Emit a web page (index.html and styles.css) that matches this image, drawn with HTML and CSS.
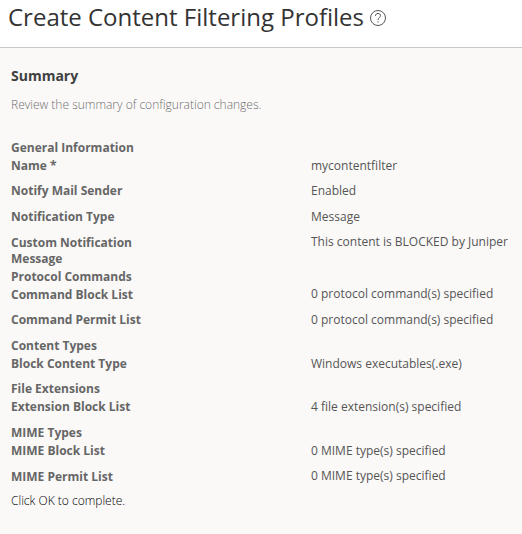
FILE: index.html
```html
<!DOCTYPE html>
<html lang="en">
<head>
<meta charset="utf-8">
<title>Create Content Filtering Profiles</title>
<link rel="stylesheet" href="styles.css">
</head>
<body>
<header class="page-header">
  <h1 class="page-title">Create Content Filtering Profiles</h1>
  <svg class="help" viewBox="0 0 18 18" width="18" height="18" role="img" aria-label="Help">
    <circle cx="9" cy="9" r="7.5"/>
    <path d="M6.5 6.9C6.5 5.3 7.5 4.4 9 4.4s2.5.9 2.5 2.3c0 1.8-2.5 1.9-2.5 4.3M9 12.3v1.3"/>
  </svg>
</header>
<main class="panel">
  <h2 class="panel-title">Summary</h2>
  <p class="intro">Review the summary of configuration changes.</p>
  <section class="group general">
    <h3 class="group-title">General Information</h3>
    <div class="row first"><span class="label">Name *</span><span class="value">mycontentfilter</span></div>
    <div class="row"><span class="label">Notify Mail Sender</span><span class="value">Enabled</span></div>
    <div class="row"><span class="label">Notification Type</span><span class="value">Message</span></div>
    <div class="row"><span class="label">Custom Notification Message</span><span class="value">This content is BLOCKED by Juniper</span></div>
  </section>
  <section class="group protocol">
    <h3 class="group-title">Protocol Commands</h3>
    <div class="row first"><span class="label">Command Block List</span><span class="value">0 protocol command(s) specified</span></div>
    <div class="row"><span class="label">Command Permit List</span><span class="value">0 protocol command(s) specified</span></div>
  </section>
  <section class="group">
    <h3 class="group-title">Content Types</h3>
    <div class="row first"><span class="label">Block Content Type</span><span class="value">Windows executables(.exe)</span></div>
  </section>
  <section class="group">
    <h3 class="group-title">File Extensions</h3>
    <div class="row first"><span class="label">Extension Block List</span><span class="value">4 file extension(s) specified</span></div>
  </section>
  <section class="group">
    <h3 class="group-title">MIME Types</h3>
    <div class="row first"><span class="label">MIME Block List</span><span class="value">0 MIME type(s) specified</span></div>
    <div class="row"><span class="label">MIME Permit List</span><span class="value">0 MIME type(s) specified</span></div>
  </section>
  <p class="closing">Click OK to complete.</p>
</main>
</body>
</html>
```
FILE: styles.css
```css
* { box-sizing: border-box; margin: 0; padding: 0; }
body {
  font-family: "Open Sans", sans-serif;
  font-size: 12px;
  line-height: 16px;
  color: #555;
  background: #fff;
  min-height: 100vh;
  display: flex;
  flex-direction: column;
}
.page-header {
  height: 48px;
  flex: none;
  display: flex;
  padding-left: 8px;
  border-bottom: 1px solid #c8c8c8;
}
.page-title { font-size: 24px; line-height: 33px; font-weight: 400; color: #333; white-space: nowrap; }
.help { margin: 9px 0 0 5px; fill: none; stroke: #444; stroke-width: 0.9; }
.panel { flex: 1; background: #faf9f8; padding: 18px 0 0 11px; }
.panel-title { font-size: 14px; line-height: 20px; font-weight: 700; color: #404040; }
.intro { margin-top: 11px; font-weight: 300; color: #6e6e6e; }
.group { margin-top: 9.6px; }
.general { margin-top: 26.8px; }
.protocol { margin-top: 2px; }
.group-title { font-size: 12px; line-height: 16px; font-weight: 700; color: #666; }
.row { display: flex; margin-top: 9.6px; }
.row.first { margin-top: 2px; }
.label { width: 300px; padding-right: 150px; font-weight: 700; color: #666; flex: none; }
.value { margin-top: -0.25px; white-space: nowrap; }
.closing { margin-top: 8px; font-weight: 300; color: #000; }
```
